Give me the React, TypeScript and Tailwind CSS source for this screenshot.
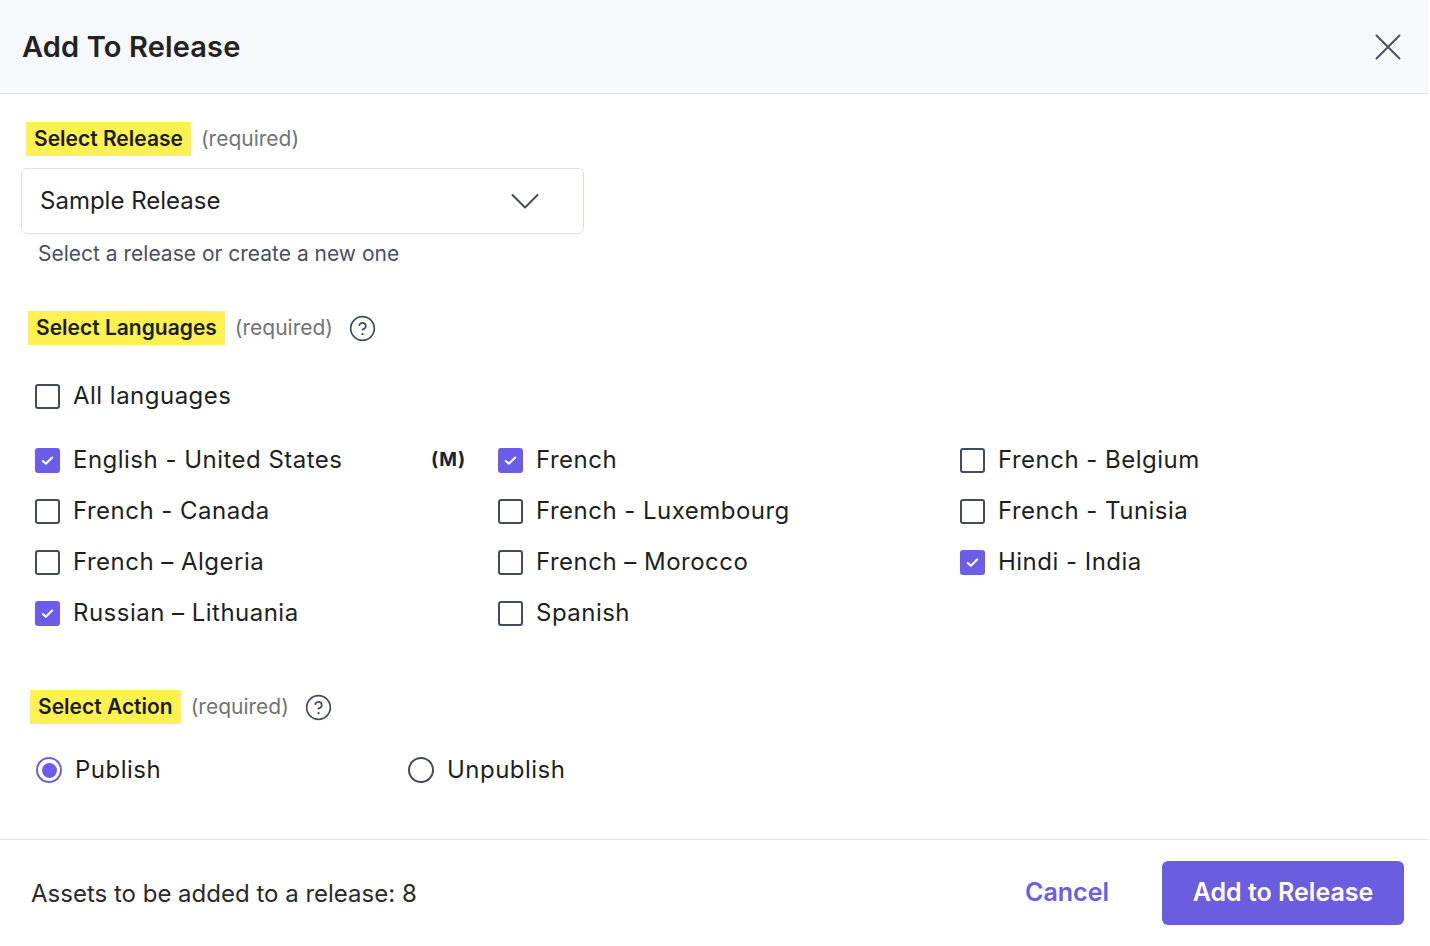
import React from "react";

const PURPLE = "#6c5ce7";

function Check({ checked }: { checked?: boolean }) {
  if (checked) {
    return (
      <span className="flex h-[25px] w-[25px] shrink-0 items-center justify-center rounded-[3px] bg-[#6c5ce7]">
        <svg width="15" height="15" viewBox="0 0 16 16" fill="none">
          <path d="M3 8.5l3.2 3L13 4.8" stroke="white" strokeWidth="2.2" strokeLinecap="round" strokeLinejoin="round" />
        </svg>
      </span>
    );
  }
  return <span className="block h-[25px] w-[25px] shrink-0 rounded-[3px] border-2 border-[#444b58] bg-white" />;
}

function Radio({ checked }: { checked?: boolean }) {
  if (checked) {
    return (
      <span className="flex h-[26px] w-[26px] shrink-0 items-center justify-center rounded-full border-2 border-[#6c5ce7] bg-white">
        <span className="block h-[15px] w-[15px] rounded-full bg-[#6c5ce7]" />
      </span>
    );
  }
  return <span className="block h-[26px] w-[26px] shrink-0 rounded-full border-2 border-[#444b58] bg-white" />;
}

function Help() {
  return (
    <svg width="27" height="27" viewBox="0 0 24 24" fill="none" stroke="#444b58" strokeWidth="1.5" strokeLinecap="round" strokeLinejoin="round">
      <circle cx="12" cy="12" r="10.5" />
      <path d="M9.09 9a3 3 0 0 1 5.83 1c0 2-3 3-3 3" />
      <path d="M12 17h.01" strokeWidth="2" />
    </svg>
  );
}

function SectionLabel({ title, help, ml }: { title: string; help?: boolean; ml: string }) {
  return (
    <div className={`flex h-[34px] items-center ${ml}`}>
      <span className="flex h-[34px] items-center bg-[#fff250] px-[8px] text-[21px] font-semibold text-[#1c1c1c]">{title}</span>
      <span className="ml-[10px] text-[21px] text-[#737373]">(required)</span>
      {help && (
        <span className="ml-[16px] flex items-center">
          <Help />
        </span>
      )}
    </div>
  );
}

type Lang = { name: string; checked?: boolean; m?: boolean };

const langs: Lang[] = [
  { name: "English - United States", checked: true, m: true },
  { name: "French", checked: true },
  { name: "French - Belgium" },
  { name: "French - Canada" },
  { name: "French - Luxembourg" },
  { name: "French - Tunisia" },
  { name: "French \u2013 Algeria" },
  { name: "French \u2013 Morocco" },
  { name: "Hindi - India", checked: true },
  { name: "Russian \u2013 Lithuania", checked: true },
  { name: "Spanish" },
];

export default function App() {
  return (
    <div
      className="flex h-[946px] w-[1428px] flex-col bg-white text-[#1f1f1f]"
      style={{ fontFamily: "Inter, 'Noto Sans', sans-serif" }}
    >
      <div className="flex h-[94px] shrink-0 items-center justify-between border-b border-[#e3e5ec] bg-[#f7f8fc] pl-[22px] pr-[27px]">
        <h1 className="text-[29px] font-semibold tracking-[0.005em] text-[#222]">Add To Release</h1>
        <svg width="26" height="26" viewBox="0 0 26 26" fill="none" stroke="#4b5260" strokeWidth="2" strokeLinecap="round">
          <path d="M1.5 1.5l23 23M24.5 1.5l-23 23" />
        </svg>
      </div>

      <div className="flex flex-1 flex-col pl-[21px]">
        <div className="mt-[28px]">
          <SectionLabel title="Select Release" ml="ml-[5px]" />
        </div>
        <div className="mt-[12px] flex h-[66px] w-[563px] items-center justify-between rounded-[6px] border border-[#dcdfe7] pl-[18px] pr-[44px]">
          <span className="text-[24px] text-[#1f1f1f]">Sample Release</span>
          <svg width="28" height="16" viewBox="0 0 28 16" fill="none" stroke="#444b58" strokeWidth="2" strokeLinecap="round" strokeLinejoin="round">
            <path d="M1.5 2l12.5 12.5L26.5 2" />
          </svg>
        </div>
        <div className="ml-[17px] mt-[6px] text-[21px] leading-[28px] text-[#4b5060]">Select a release or create a new one</div>

        <div className="mt-[43px]">
          <SectionLabel title="Select Languages" help ml="ml-[7px]" />
        </div>

        <div className="ml-[14px] mt-[38px] flex h-[26px] items-center gap-[13px]">
          <Check />
          <span className="text-[24px] tracking-[0.02em]">All languages</span>
        </div>

        <div className="ml-[14px] mt-[38px] grid grid-cols-[463px_462px_1fr] gap-y-[25px]">
          {langs.map((l) => (
            <div key={l.name} className="flex h-[26px] items-center gap-[13px]">
              <Check checked={l.checked} />
              <span className="text-[24px] tracking-[0.02em]">{l.name}</span>
              {l.m && <span className="ml-auto pr-[32px] text-[19px] font-bold tracking-[0.04em] text-[#222]">(M)</span>}
            </div>
          ))}
        </div>

        <div className="mt-[64px]">
          <SectionLabel title="Select Action" help ml="ml-[9px]" />
        </div>

        <div className="ml-[15px] mt-[33px] flex h-[26px] items-center">
          <div className="flex w-[372px] items-center gap-[13px]">
            <Radio checked />
            <span className="text-[24px] tracking-[0.02em]">Publish</span>
          </div>
          <div className="flex items-center gap-[13px]">
            <Radio />
            <span className="text-[24px] tracking-[0.02em]">Unpublish</span>
          </div>
        </div>
      </div>

      <div className="flex h-[107px] shrink-0 items-center justify-between border-t border-[#e3e5ec] pl-[31px] pr-[24px]">
        <span className="mt-[2px] text-[24px] text-[#2a2a2a]">Assets to be added to a release: 8</span>
        <div className="flex items-center gap-[53px]">
          <button className="text-[25px] font-semibold" style={{ color: PURPLE }}>Cancel</button>
          <button className="flex h-[64px] w-[242px] items-center justify-center rounded-[6px] bg-[#6b5ddf] text-[25px] font-semibold text-white">
            Add to Release
          </button>
        </div>
      </div>
    </div>
  );
}
